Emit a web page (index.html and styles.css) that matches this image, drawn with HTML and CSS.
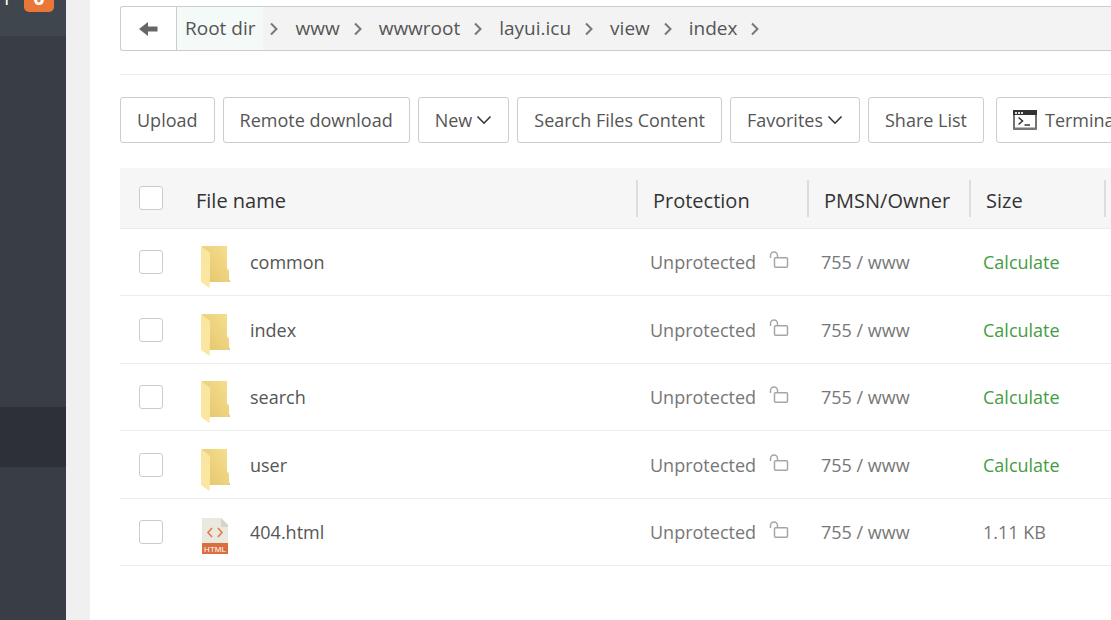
FILE: index.html
```html
<!DOCTYPE html>
<html lang="en">
<head>
    <meta charset="UTF-8">
    <title>Files</title>
    <link rel="stylesheet" href="styles.css">
</head>
<body>

    <!-- Shared icons -->
    <svg class="sprite" aria-hidden="true">
        <defs>
            <linearGradient id="back" x1="0" y1="1" x2="1" y2="0">
                <stop offset="0" stop-color="#e6c46c"/>
                <stop offset="1" stop-color="#f5df8e"/>
            </linearGradient>
            <linearGradient id="flap" x1="0" y1="0" x2="0" y2="1">
                <stop offset="0" stop-color="#f8e6a0"/>
                <stop offset="1" stop-color="#fbe7a2"/>
            </linearGradient>
        </defs>
        <symbol id="folder" viewBox="0 -10 30 54">
            <path d="M2 1H27V23L29 26V37H9Z" fill="url(#back)"/>
            <path d="M28 37H30V34Z" fill="#d9c9a0"/>
            <path d="M1 1L10 8V31L9.500 43L1 37Z" fill="url(#flap)"/>
        </symbol>
        <symbol id="unlock" viewBox="0 0 20 18">
            <path d="M1.500 7V4.500A3.500 3.500 0 0 1 8.500 4.500V6.500" fill="none" stroke="#a6a6a6" stroke-width="1.500"/>
            <rect x="5.500" y="6.800" width="13" height="9.500" rx="1" fill="none" stroke="#a6a6a6" stroke-width="1.500"/>
        </symbol>
        <symbol id="next" viewBox="0 0 10 14">
            <path d="M2 1.500L7.500 7L2 12.500" fill="none" stroke="#777" stroke-width="2"/>
        </symbol>
        <symbol id="down" viewBox="0 0 16 10">
            <path d="M1.500 1.500L8 8.200L14.500 1.500" fill="none" stroke="#333" stroke-width="1.600"/>
        </symbol>
    </svg>

    <div class="page">
        <aside class="sidebar">
            <div class="sidebar-top"><span>1</span><span class="badge">0</span></div>
            <nav class="menu">
                <a href="#files" class="active" aria-label="Files"></a>
            </nav>
        </aside>

        <main class="content">
            <nav class="path">
                <button type="button" class="path-back" aria-label="Back">
                    <svg width="20" height="14" viewBox="0 0 20 14"><path d="M0 7L9 0V4.500H18.500V9.500H9V14Z" fill="#666"/></svg>
                </button>
                <a href="#root" class="root">Root dir</a><svg class="next"><use href="#next"/></svg>
                <a href="#www">www</a><svg class="next"><use href="#next"/></svg>
                <a href="#wwwroot">wwwroot</a><svg class="next"><use href="#next"/></svg>
                <a href="#layui">layui.icu</a><svg class="next"><use href="#next"/></svg>
                <a href="#view">view</a><svg class="next"><use href="#next"/></svg>
                <a href="#index">index</a><svg class="next"><use href="#next"/></svg>
            </nav>

            <div class="toolbar">
                <button type="button">Upload</button>
                <button type="button">Remote download</button>
                <button type="button">New<svg class="down"><use href="#down"/></svg></button>
                <button type="button">Search Files Content</button>
                <button type="button">Favorites<svg class="down"><use href="#down"/></svg></button>
                <button type="button">Share List</button>
                <button type="button" class="terminal">
                    <svg width="24" height="20" viewBox="0 0 24 20">
                        <rect x="1" y="1" width="22" height="18" fill="#fff" stroke="#444" stroke-width="1.500"/>
                        <path d="M0 0H24V5H0Z" fill="#333"/>
                        <path d="M2 2H4V4H2ZM5 2H7V4H5ZM8 2H10V4H8Z" fill="#ddd"/>
                        <path d="M1 18.500H23" stroke="#777" stroke-width="2"/>
                        <path d="M5.500 7.500L9.500 11L5.500 14.500M11.500 15H17" fill="none" stroke="#333" stroke-width="1.500"/>
                    </svg>Terminal
                </button>
            </div>

            <table class="files">
                <colgroup>
                    <col class="col-check">
                    <col>
                    <col class="col-protection">
                    <col class="col-owner">
                    <col class="col-size">
                    <col class="col-rest">
                </colgroup>
                <thead>
                    <tr>
                        <th><input type="checkbox" aria-label="Select all"></th>
                        <th class="split">File name</th>
                        <th class="split">Protection</th>
                        <th class="split">PMSN/Owner</th>
                        <th class="split">Size</th>
                        <td></td>
                    </tr>
                </thead>
                <tbody>
                    <tr>
                        <td><input type="checkbox" aria-label="Select common"></td>
                        <td><a href="#common" class="name"><svg class="icon"><use href="#folder"/></svg>common</a></td>
                        <td>Unprotected<svg class="unlock"><use href="#unlock"/></svg></td>
                        <td>755 / www</td>
                        <td><a href="#size" class="calc">Calculate</a></td>
                        <td></td>
                    </tr>
                    <tr>
                        <td><input type="checkbox" aria-label="Select index"></td>
                        <td><a href="#index" class="name"><svg class="icon"><use href="#folder"/></svg>index</a></td>
                        <td>Unprotected<svg class="unlock"><use href="#unlock"/></svg></td>
                        <td>755 / www</td>
                        <td><a href="#size" class="calc">Calculate</a></td>
                        <td></td>
                    </tr>
                    <tr>
                        <td><input type="checkbox" aria-label="Select search"></td>
                        <td><a href="#search" class="name"><svg class="icon"><use href="#folder"/></svg>search</a></td>
                        <td>Unprotected<svg class="unlock"><use href="#unlock"/></svg></td>
                        <td>755 / www</td>
                        <td><a href="#size" class="calc">Calculate</a></td>
                        <td></td>
                    </tr>
                    <tr>
                        <td><input type="checkbox" aria-label="Select user"></td>
                        <td><a href="#user" class="name"><svg class="icon"><use href="#folder"/></svg>user</a></td>
                        <td>Unprotected<svg class="unlock"><use href="#unlock"/></svg></td>
                        <td>755 / www</td>
                        <td><a href="#size" class="calc">Calculate</a></td>
                        <td></td>
                    </tr>
                    <tr>
                        <td><input type="checkbox" aria-label="Select 404.html"></td>
                        <td><a href="#404" class="name">
                            <svg class="icon" viewBox="0 -10 30 54">
                                <path d="M2 3H21L28 10V30H2Z" fill="#e9e9e0"/>
                                <path d="M21 3L28 10V12H21Z" fill="#d5d5c9"/>
                                <path d="M12 13L8 17.500L12 22M18 13L22 17.500L18 22" fill="none" stroke="#e07b4c" stroke-width="1.600"/>
                                <path d="M2 28H28V39H2Z" fill="#d96f3e"/>
                                <text x="15" y="37" class="tag">HTML</text>
                            </svg>404.html</a></td>
                        <td>Unprotected<svg class="unlock"><use href="#unlock"/></svg></td>
                        <td>755 / www</td>
                        <td>1.11 KB</td>
                        <td></td>
                    </tr>
                </tbody>
            </table>
        </main>
    </div>

</body>
</html>
```

FILE: styles.css
```css
* {
    box-sizing: border-box;
}
body {
    margin: 0;
    background-color: #f0f0f0;
    color: #555;
    font-family: "Open Sans", "Noto Sans", sans-serif;
    font-size: 18px;
    overflow: hidden;
}
a {
    color: inherit;
    text-decoration: none;
}
button {
    font: inherit;
    color: inherit;
    background-color: #fff;
    cursor: pointer;
}
.sprite {
    position: absolute;
    width: 0;
    height: 0;
}
.page {
    display: flex;
    gap: 24px;
    min-height: 100vh;
}

/* Sidebar */
.sidebar {
    flex: 0 0 66px;
    background-color: #393d46;
}
.sidebar-top {
    display: flex;
    align-items: flex-end;
    justify-content: flex-end;
    gap: 12px;
    height: 36px;
    padding: 0 12px 24px 0;
    background-color: #40464d;
    color: #fff;
    font-size: 20px;
    line-height: 28px;
}
.badge {
    width: 30px;
    border-radius: 5px;
    background-color: #ea7738;
    font-weight: bold;
    text-align: center;
}
.menu {
    padding-top: 371px;
}
.menu a {
    display: block;
    height: 60px;
}
.menu .active {
    background-color: #2d3038;
}

/* Content */
.content {
    flex: 1;
    min-width: 0;
    padding: 6px 0 0 30px;
    background-color: #fff;
    overflow: hidden;
}
.path {
    display: flex;
    align-items: center;
    height: 45px;
    border: 1px solid #ccc;
    border-right: 0;
    border-radius: 3px 0 0 3px;
    background-color: #f3f3f3;
    font-size: 19px;
    white-space: nowrap;
}
.path-back {
    display: flex;
    align-items: center;
    justify-content: center;
    width: 56px;
    height: 100%;
    border: 0;
    border-right: 1px solid #ccc;
    border-radius: 3px 0 0 3px;
}
.path a {
    padding: 0 7px 0 10px;
    line-height: 43px;
}
.path .root {
    padding: 0 8px;
    background-color: #f4faf8;
}
.next {
    width: 10px;
    height: 14px;
    margin: 0 6px;
}
.toolbar {
    display: flex;
    gap: 8px;
    margin-top: 23px;
    padding: 22px 0 25px;
    border-top: 1px solid #ececec;
}
.toolbar button {
    display: flex;
    flex: none;
    align-items: center;
    height: 46px;
    padding: 0 16px;
    border: 1px solid #ccc;
    border-radius: 3px;
    white-space: nowrap;
}
.down {
    width: 16px;
    height: 10px;
    margin-left: 4px;
}
.toolbar .terminal {
    gap: 8px;
    margin-left: 4px;
}

/* File list */
.files {
    width: 100%;
    table-layout: fixed;
    border-collapse: separate;
    border-spacing: 0;
    color: #777;
}
.col-check {
    width: 61px;
}
.col-protection {
    width: 171px;
}
.col-owner {
    width: 162px;
}
.col-size {
    width: 135px;
}
.col-rest {
    width: 5px;
}
.files th,
.files td {
    height: 67px;
    padding: 0 0 0 12px;
    border-bottom: 1px solid #ececec;
    text-align: left;
    vertical-align: middle;
    white-space: nowrap;
}
.files tbody tr:nth-child(even) td {
    height: 68px;
}
.files thead th,
.files thead td {
    height: 61px;
    padding: 4px 0 0 15px;
    background-color: #f6f6f6;
    color: #333;
    font-size: 20px;
    font-weight: normal;
}
.files thead .split {
    background-image: linear-gradient(#ddd, #ddd);
    background-repeat: no-repeat;
    background-position: right center;
    background-size: 2px 37px;
}
.files tr > :first-child {
    padding: 0 0 0 19px;
}
.files tr > :last-child {
    padding: 0;
}
.files input {
    display: block;
    appearance: none;
    width: 24px;
    height: 24px;
    margin: 0;
    border: 1px solid #ccc;
    border-radius: 3px;
    background-color: #fff;
}
.name {
    display: flex;
    align-items: center;
    gap: 20px;
    padding-left: 7px;
    color: #555;
}
.icon {
    width: 30px;
    height: 54px;
}
.tag {
    fill: #fff;
    font-family: "Liberation Sans", sans-serif;
    font-size: 8px;
    text-anchor: middle;
}
.unlock {
    width: 20px;
    height: 18px;
    margin-left: 13px;
}
.calc {
    color: #449d44;
}
```
